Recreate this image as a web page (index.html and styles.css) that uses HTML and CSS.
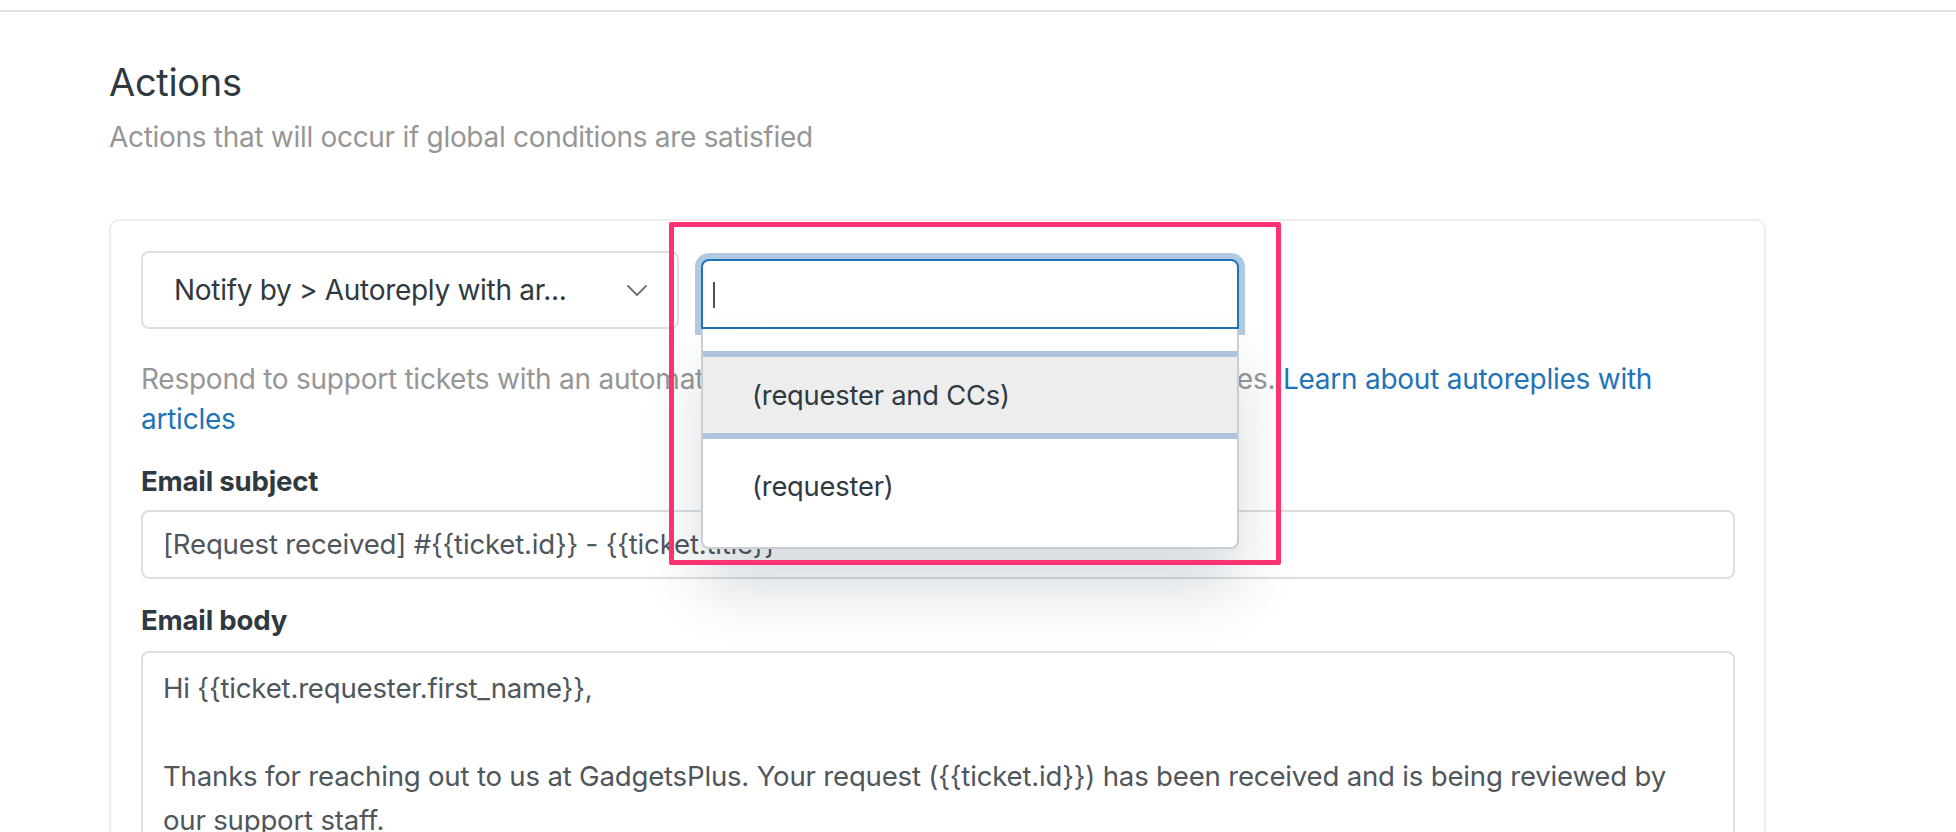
FILE: index.html
```html
<!DOCTYPE html>
<html lang="en">
<head>
<meta charset="utf-8">
<title>Actions</title>
<link rel="stylesheet" href="styles.css">
</head>
<body>
<div class="topbar"></div>
<main class="section">
  <h2 class="title">Actions</h2>
  <p class="subtitle">Actions that will occur if global conditions are satisfied</p>
  <div class="card">
    <div class="row">
      <div class="select">
        <span class="select-text">Notify by &gt; Autoreply with ar...</span>
        <svg class="chevron" width="20" height="11" viewBox="0 0 20 11"><path d="M1 1l9 9 9-9" fill="none" stroke="#68737d" stroke-width="1.8" stroke-linecap="round" stroke-linejoin="round"/></svg>
      </div>
      <div class="combo">
        <div class="combo-input"><span class="caret"></span></div>
        <ul class="menu">
          <li class="menu-item is-active">(requester and CCs)</li>
          <li class="menu-item">(requester)</li>
        </ul>
      </div>
    </div>
    <p class="desc">Respond to support tickets with an automatic email that has related help center articles. <a class="link" href="#">Learn about autoreplies with articles</a></p>
    <div class="label">Email subject</div>
    <div class="field">[Request received] #{{ticket.id}} - {{ticket.title}}</div>
    <div class="label label-body">Email body</div>
    <div class="textarea">
      <p class="body-line body-greeting">Hi {{ticket.requester.first_name}},</p>
      <p class="body-line">Thanks for reaching out to us at GadgetsPlus. Your request ({{ticket.id}}) has been received and is being reviewed by our support staff.</p>
    </div>
  </div>
</main>
<div class="annotation"></div>
</body>
</html>
```
FILE: styles.css
```css
* { box-sizing: border-box; }
html, body { margin: 0; padding: 0; background: #fff; }
body {
  font-family: Inter, "Noto Sans", "Liberation Sans", sans-serif;
  color: #2f3941;
  width: 1956px;
  height: 832px;
  overflow: hidden;
  position: relative;
}
.topbar {
  height: 12px;
  border-bottom: 2px solid #e3e3e3;
}
.section {
  padding: 0 190px 0 109px;
}
.title {
  margin: 46px 0 0;
  font-size: 38px;
  line-height: 48px;
  font-weight: 400;
  letter-spacing: -0.3px;
  color: #2f3941;
}
.subtitle {
  margin: 11px 0 0;
  font-size: 28px;
  line-height: 40px;
  color: #969696;
  letter-spacing: -0.3px;
}
.card {
  margin-top: 62px;
  border: 2px solid #eeeeee;
  border-radius: 10px;
  padding: 30px 29px 40px 30px;
  height: 700px;
}
.row {
  display: flex;
  align-items: flex-end;
  gap: 22px;
}
.select {
  width: 538px;
  height: 78px;
  border: 2px solid #dcdfe1;
  border-radius: 8px;
  display: flex;
  align-items: center;
  justify-content: space-between;
  padding: 0 30px 0 31px;
  font-size: 28px;
  line-height: 40px;
  letter-spacing: -0.3px;
}
.chevron { display: block; }
.combo {
  position: relative;
  width: 538px;
}
.combo-input {
  height: 70px;
  border: 2px solid #1f73b7;
  border-radius: 8px 8px 0 0;
  box-shadow: 0 0 0 6px #b1c9e2;
  padding: 0 10px;
  display: flex;
  align-items: center;
  background: #fff;
}
.caret {
  display: block;
  width: 2px;
  height: 26px;
  background: #4a4f55;
  margin-top: 2px;
}
.menu {
  position: absolute;
  left: 0;
  right: 0;
  top: 70px;
  margin: 0;
  padding: 22px 0 20px;
  list-style: none;
  background: #fff;
  border: 2px solid #c9ced2;
  border-top: 0;
  border-radius: 0 0 8px 8px;
  box-shadow: 0 40px 60px rgba(4, 40, 60, 0.16);
  z-index: 2;
}
.menu-item {
  height: 88px;
  padding-left: 49px;
  display: flex;
  align-items: center;
  font-size: 27.3px;
  letter-spacing: -0.2px;
  color: #2f3941;
  border-top: 6px solid transparent;
}
.menu-item.is-active {
  background: #ededed;
  border-top: 6px solid #adc4dc;
  border-bottom: 6px solid #adc4dc;
}
.desc {
  margin: 30px 0 0;
  font-size: 28px;
  line-height: 40px;
  color: #969696;
  letter-spacing: -0.25px;
}
.link { color: #1f73b7; text-decoration: none; }
.label {
  margin-top: 22px;
  font-size: 27.6px;
  line-height: 40px;
  font-weight: 700;
  letter-spacing: -0.2px;
  color: #2f3941;
}
.label-body { margin-top: 21px; }
.field {
  margin-top: 9px;
  border: 2px solid #dcdfe1;
  border-radius: 8px;
  padding: 12px 20px;
  font-size: 27.6px;
  line-height: 41px;
  letter-spacing: -0.2px;
  color: #4f565c;
}
.textarea {
  margin-top: 11px;
  border: 2px solid #dcdfe1;
  border-radius: 8px;
  padding: 13px 20px;
  font-size: 27.6px;
  line-height: 44px;
  letter-spacing: -0.2px;
  color: #4f565c;
  height: 400px;
}
.body-line { margin: 0; }
.body-greeting { margin-bottom: 44px; }
.annotation {
  position: absolute;
  left: 669px;
  top: 222px;
  width: 612px;
  height: 343px;
  border: 5px solid #fd3371;
  border-radius: 2px;
  z-index: 5;
}
```
